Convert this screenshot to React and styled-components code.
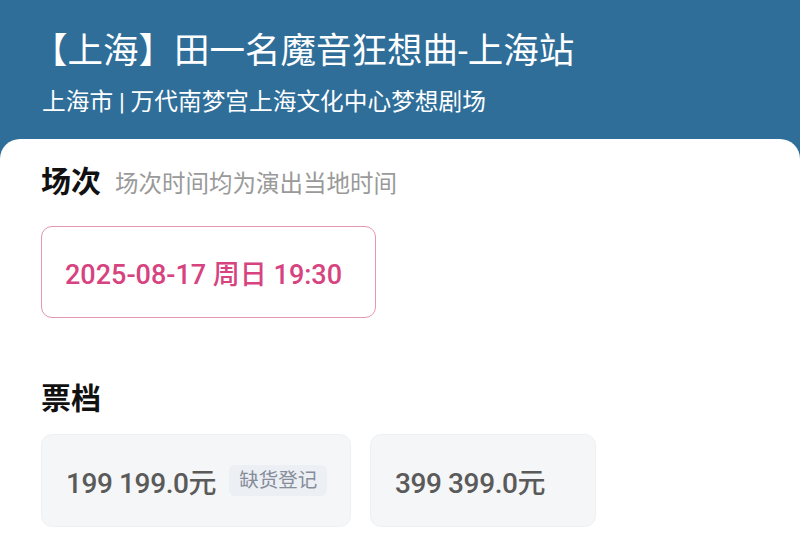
import React from 'react';
import styled, {createGlobalStyle} from 'styled-components';

const GlobalStyle = createGlobalStyle`
  html, body {
    margin:0;
    padding:0;
    background:#2e6e99;
  }
  body {
    font-family:Roboto, "Noto Sans CJK SC", sans-serif;
  }
`;

const Page = styled.div`
  width:800px;
  height:551px;
  overflow:hidden;
  display:flex;
  flex-direction:column;
  background:#2e6e99;
`;

const Header = styled.div`
  padding:31px 42px 22px;
  color:#fff;
`;

const Title = styled.div`
  font-size:35.5px;
  line-height:41px;
  margin-left:-10px;
`;

const Venue = styled.div`
  margin-top:15px;
  font-size:23.7px;
  line-height:30px;
`;

const Panel = styled.div`
  flex:1;
  background:#fff;
  border-radius:20px 20px 0 0;
  padding:25px 41px 0;
`;

const SectionHead = styled.div`
  display:flex;
  align-items:baseline;
  gap:14px;
  margin-top:${p => p.gap || 0}px;
`;

const SectionTitle = styled.span`
  font-size:30px;
  line-height:35px;
  font-weight:bold;
  color:#111;
`;

const Hint = styled.span`
  font-size:23.5px;
  color:#9a9a9a;
`;

const SessionBox = styled.div`
  margin-top:27px;
  width:335px;
  height:92px;
  box-sizing:border-box;
  border:1.5px solid #e596b3;
  border-radius:11px;
  display:flex;
  align-items:center;
  padding-left:23px;
  font-size:27px;
  font-weight:500;
  color:#d6437f;
`;

const CardRow = styled.div`
  display:flex;
  gap:19px;
  margin-top:18px;
`;

const Card = styled.div`
  width:${p => p.w}px;
  height:93px;
  box-sizing:border-box;
  background:#f5f6f7;
  border:1px solid #eef0f2;
  border-radius:11px;
  display:flex;
  align-items:center;
  padding-left:24px;
  gap:13px;
`;

const Price = styled.span`
  font-size:28px;
  font-weight:500;
  color:#5a5a5a;
  letter-spacing:-0.4px;
`;

const Badge = styled.span`
  background:#eceff3;
  color:#858c9a;
  font-size:19.5px;
  line-height:31px;
  padding:0 10px;
  border-radius:6px;
`;

const App = () => {
  const tickets = [
    {price:'199 199.0元', w:310, soldOut:true},
    {price:'399 399.0元', w:226}
  ];

  return (
    <>
      <GlobalStyle />
      <Page>
        <Header>
          <Title>【上海】田一名魔音狂想曲-上海站</Title>
          <Venue>上海市 | 万代南梦宫上海文化中心梦想剧场</Venue>
        </Header>
        <Panel>
          <SectionHead>
            <SectionTitle>场次</SectionTitle>
            <Hint>场次时间均为演出当地时间</Hint>
          </SectionHead>
          <SessionBox>2025-08-17 周日 19:30</SessionBox>

          <SectionHead gap={63}>
            <SectionTitle>票档</SectionTitle>
          </SectionHead>
          <CardRow>
            {tickets.map(t => (
              <Card key={t.price} w={t.w}>
                <Price>{t.price}</Price>
                {t.soldOut && <Badge>缺货登记</Badge>}
              </Card>
            ))}
          </CardRow>
        </Panel>
      </Page>
    </>
  );
};

export default App;
